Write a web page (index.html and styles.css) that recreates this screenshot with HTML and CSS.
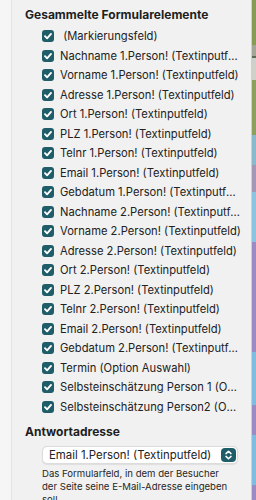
FILE: index.html
```html
<!DOCTYPE html>
<html lang="de">
<head>
<meta charset="utf-8">
<title>Formularelemente</title>
<link rel="stylesheet" href="styles.css">
</head>
<body>
<div class="window">
  <div class="gutter"></div>
  <div class="panel">
    <h2 class="section-title">Gesammelte Formularelemente</h2>
    <ul class="field-list">
      <li class="field"><span class="check"><svg viewBox="0 0 12 12"><path d="M3 6.2 L5.1 8.3 L9 3.9"/></svg></span><span class="label"> (Markierungsfeld)</span></li>
      <li class="field"><span class="check"><svg viewBox="0 0 12 12"><path d="M3 6.2 L5.1 8.3 L9 3.9"/></svg></span><span class="label">Nachname 1.Person! (Textinputfeld)</span></li>
      <li class="field"><span class="check"><svg viewBox="0 0 12 12"><path d="M3 6.2 L5.1 8.3 L9 3.9"/></svg></span><span class="label">Vorname 1.Person! (Textinputfeld)</span></li>
      <li class="field"><span class="check"><svg viewBox="0 0 12 12"><path d="M3 6.2 L5.1 8.3 L9 3.9"/></svg></span><span class="label">Adresse 1.Person! (Textinputfeld)</span></li>
      <li class="field"><span class="check"><svg viewBox="0 0 12 12"><path d="M3 6.2 L5.1 8.3 L9 3.9"/></svg></span><span class="label">Ort 1.Person! (Textinputfeld)</span></li>
      <li class="field"><span class="check"><svg viewBox="0 0 12 12"><path d="M3 6.2 L5.1 8.3 L9 3.9"/></svg></span><span class="label">PLZ 1.Person! (Textinputfeld)</span></li>
      <li class="field"><span class="check"><svg viewBox="0 0 12 12"><path d="M3 6.2 L5.1 8.3 L9 3.9"/></svg></span><span class="label">Telnr 1.Person! (Textinputfeld)</span></li>
      <li class="field"><span class="check"><svg viewBox="0 0 12 12"><path d="M3 6.2 L5.1 8.3 L9 3.9"/></svg></span><span class="label">Email 1.Person! (Textinputfeld)</span></li>
      <li class="field"><span class="check"><svg viewBox="0 0 12 12"><path d="M3 6.2 L5.1 8.3 L9 3.9"/></svg></span><span class="label">Gebdatum 1.Person! (Textinputfeld)</span></li>
      <li class="field"><span class="check"><svg viewBox="0 0 12 12"><path d="M3 6.2 L5.1 8.3 L9 3.9"/></svg></span><span class="label">Nachname 2.Person! (Textinputfeld)</span></li>
      <li class="field"><span class="check"><svg viewBox="0 0 12 12"><path d="M3 6.2 L5.1 8.3 L9 3.9"/></svg></span><span class="label">Vorname 2.Person! (Textinputfeld)</span></li>
      <li class="field"><span class="check"><svg viewBox="0 0 12 12"><path d="M3 6.2 L5.1 8.3 L9 3.9"/></svg></span><span class="label">Adresse 2.Person! (Textinputfeld)</span></li>
      <li class="field"><span class="check"><svg viewBox="0 0 12 12"><path d="M3 6.2 L5.1 8.3 L9 3.9"/></svg></span><span class="label">Ort 2.Person! (Textinputfeld)</span></li>
      <li class="field"><span class="check"><svg viewBox="0 0 12 12"><path d="M3 6.2 L5.1 8.3 L9 3.9"/></svg></span><span class="label">PLZ 2.Person! (Textinputfeld)</span></li>
      <li class="field"><span class="check"><svg viewBox="0 0 12 12"><path d="M3 6.2 L5.1 8.3 L9 3.9"/></svg></span><span class="label">Telnr 2.Person! (Textinputfeld)</span></li>
      <li class="field"><span class="check"><svg viewBox="0 0 12 12"><path d="M3 6.2 L5.1 8.3 L9 3.9"/></svg></span><span class="label">Email 2.Person! (Textinputfeld)</span></li>
      <li class="field"><span class="check"><svg viewBox="0 0 12 12"><path d="M3 6.2 L5.1 8.3 L9 3.9"/></svg></span><span class="label">Gebdatum 2.Person! (Textinputfeld)</span></li>
      <li class="field"><span class="check"><svg viewBox="0 0 12 12"><path d="M3 6.2 L5.1 8.3 L9 3.9"/></svg></span><span class="label">Termin (Option Auswahl)</span></li>
      <li class="field"><span class="check"><svg viewBox="0 0 12 12"><path d="M3 6.2 L5.1 8.3 L9 3.9"/></svg></span><span class="label">Selbsteinschätzung Person 1 (Option Auswahl)</span></li>
      <li class="field"><span class="check"><svg viewBox="0 0 12 12"><path d="M3 6.2 L5.1 8.3 L9 3.9"/></svg></span><span class="label">Selbsteinschätzung Person2 (Option Auswahl)</span></li>
    </ul>
    <h2 class="section-title reply-title">Antwortadresse</h2>
    <div class="select">
      <span class="select-value">Email 1.Person! (Textinputfeld)</span>
      <span class="stepper"><svg viewBox="0 0 15 14"><path d="M5 5.6 L7.5 3.2 L10 5.6 M5 8.4 L7.5 10.8 L10 8.4"/></svg></span>
    </div>
    <p class="hint">Das Formularfeld, in dem der Besucher der Seite seine E-Mail-Adresse eingeben soll.</p>
  </div>
  <div class="desktop"></div>
</div>
</body>
</html>
```
FILE: styles.css
```css
* { box-sizing: border-box; }
html, body {
  margin: 0;
  padding: 0;
  width: 256px;
  height: 500px;
  overflow: hidden;
}
body {
  font-family: Inter, "Noto Sans", sans-serif;
  color: #222;
  background: #f0f0f0;
}
.window {
  display: flex;
  height: 500px;
}
.gutter {
  width: 12px;
  flex: none;
  background: #f6f6f6;
  border-right: 1px solid #e3e3e3;
}
.panel {
  flex: 1;
  min-width: 0;
  background: #f1f1f1;
  padding: 7px 9px 0 13px;
  overflow: hidden;
}
.section-title {
  margin: 0;
  font-size: 12px;
  font-weight: 700;
  line-height: 16px;
  color: #1e1e1e;
}
.field-list {
  list-style: none;
  margin: 3.5px 0 0;
  padding: 0 0 0 17px;
}
.field {
  display: flex;
  align-items: center;
  gap: 6px;
  height: 19.5px;
}
.check {
  flex: none;
  width: 12px;
  height: 12px;
  border-radius: 3px;
  background: #1f5d68;
  display: flex;
}
.check svg {
  width: 12px;
  height: 12px;
  fill: none;
  stroke: #fff;
  stroke-width: 1.9;
  stroke-linecap: round;
  stroke-linejoin: round;
}
.label {
  font-size: 11.2px;
  line-height: 16px;
  white-space: pre;
  overflow: hidden;
  text-overflow: ellipsis;
}
.reply-title {
  margin-top: 7px;
}
.select {
  margin: 6px 0 0 17px;
  width: 196px;
  height: 18px;
  background: #fff;
  border: 1px solid #dcdcdc;
  border-radius: 5px;
  display: flex;
  align-items: center;
  justify-content: space-between;
  padding: 0 1px 0 6px;
  box-shadow: 0 0.5px 1px rgba(0,0,0,0.08);
}
.select-value {
  font-size: 11.4px;
  line-height: 16px;
  white-space: nowrap;
}
.stepper {
  width: 15px;
  height: 14px;
  border-radius: 4px;
  background: #1f5d68;
  display: flex;
}
.stepper svg {
  width: 15px;
  height: 14px;
  fill: none;
  stroke: #fff;
  stroke-width: 1.5;
  stroke-linecap: round;
  stroke-linejoin: round;
}
.hint {
  margin: 3px 0 0 17px;
  width: 188px;
  font-size: 9.6px;
  line-height: 13px;
  color: #262626;
}
.desktop {
  width: 5px;
  flex: none;
  border-left: 1px solid #cfcfcf;
  background: linear-gradient(to bottom,
    #879b55 0 45px,
    #a3a596 45px 56px,
    #5f6a55 56px 58px,
    #cfd0ca 58px 80px,
    #8c9f5c 80px 135px,
    #8ab9cd 135px 165px,
    #a497b5 165px 192px,
    #8cc3df 192px 242px,
    #9c8bc2 242px 352px,
    #7fbde0 352px 405px,
    #9c8bc2 405px 435px,
    #7fbde0 435px 485px,
    #9c8bc2 485px 500px);
}
```
